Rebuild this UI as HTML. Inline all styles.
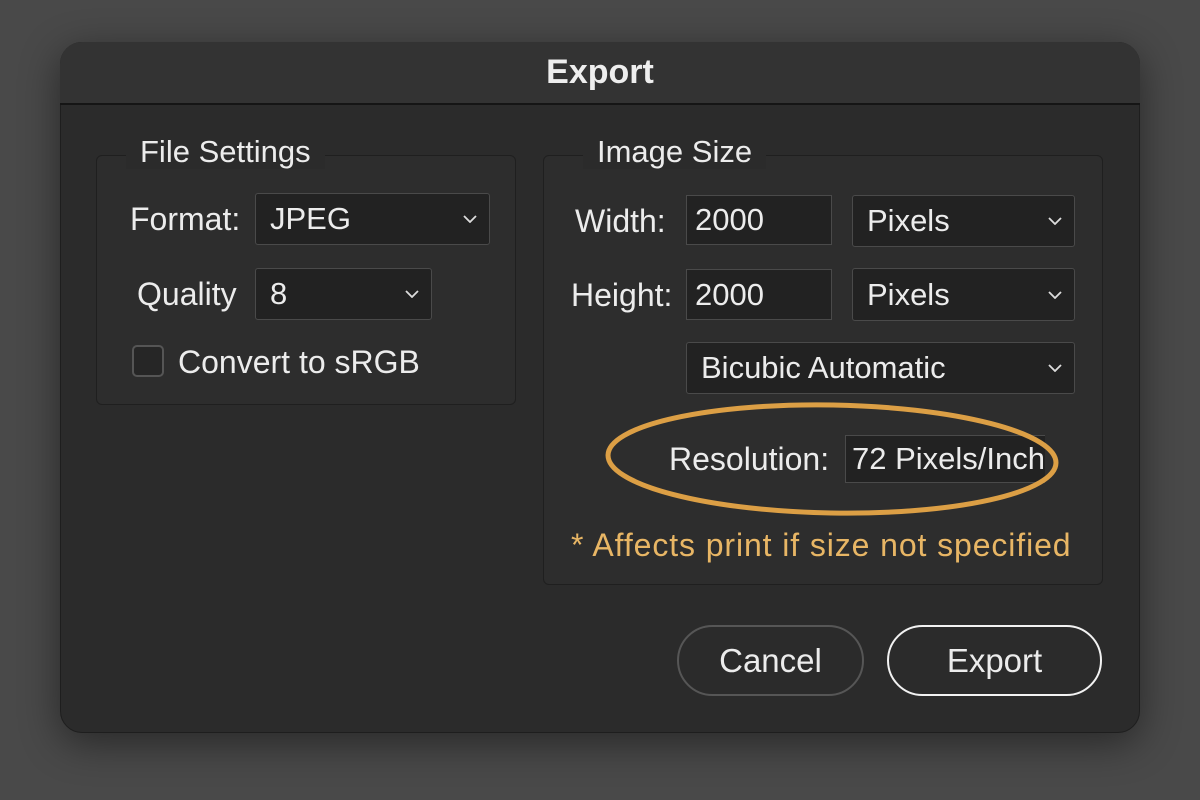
<!DOCTYPE html>
<html><head><style>
*{margin:0;padding:0;box-sizing:border-box}
body{width:1200px;height:800px;background:#494949;font-family:"Liberation Sans",sans-serif;color:#ececec;position:relative;overflow:hidden}
.dlg{position:absolute;left:60px;top:42px;width:1080px;height:691px;background:#2b2b2b;border-radius:22px;border:1px solid #1e1e1e;box-shadow:0 10px 40px rgba(0,0,0,.45)}
.tb{position:absolute;left:0;top:0;width:100%;height:63px;background:#333;border-radius:22px 22px 0 0;border-bottom:2px solid #151515;text-align:center;font-weight:bold;font-size:34px;line-height:60px;color:#eee}
.a{position:absolute;white-space:nowrap}
.fs{position:absolute;border:1px solid #1f1f1f;border-radius:6px;background:#2d2d2d}
.lg{position:absolute;background:#2b2b2b;padding:0 14px;font-size:31px;line-height:34px}
.lbl{font-size:32px;line-height:34px}
.box{position:absolute;background:#222;border:1px solid #4a4a4a;border-radius:3px;font-size:31px;padding-left:14px;display:flex;align-items:center}
.box svg{position:absolute;right:12px;top:50%;margin-top:-4px}
.btn{position:absolute;border-radius:36px;font-size:33px;display:flex;align-items:center;justify-content:center}
</style></head><body>
<div class="dlg"></div>
<div class="a" style="left:60px;top:42px;width:1080px;height:63px;">
<div class="tb">Export</div></div>

<div class="fs" style="left:96px;top:155px;width:420px;height:250px"></div>
<div class="a lg" style="left:126px;top:135px">File Settings</div>
<div class="a lbl" style="left:130px;top:202px">Format:</div>
<div class="box" style="left:255px;top:193px;width:235px;height:52px">JPEG<svg width="14" height="8"><path d="M1 1l6 6 6-6" stroke="#ddd" stroke-width="1.8" fill="none"/></svg></div>
<div class="a lbl" style="left:137px;top:277px">Quality</div>
<div class="box" style="left:255px;top:268px;width:177px;height:52px">8<svg width="14" height="8"><path d="M1 1l6 6 6-6" stroke="#ddd" stroke-width="1.8" fill="none"/></svg></div>
<div class="a" style="left:132px;top:345px;width:32px;height:32px;border:2px solid #555;border-radius:5px;background:#262626"></div>
<div class="a lbl" style="left:178px;top:345px">Convert to sRGB</div>

<div class="fs" style="left:543px;top:155px;width:560px;height:430px"></div>
<div class="a lg" style="left:583px;top:135px">Image Size</div>
<div class="a lbl" style="left:575px;top:204px">Width:</div>
<div class="box" style="left:686px;top:195px;width:146px;height:50px;padding-left:8px;border-radius:0">2000</div>
<div class="box" style="left:852px;top:195px;width:223px;height:52px">Pixels<svg width="14" height="8"><path d="M1 1l6 6 6-6" stroke="#ddd" stroke-width="1.8" fill="none"/></svg></div>
<div class="a lbl" style="left:571px;top:278px">Height:</div>
<div class="box" style="left:686px;top:269px;width:146px;height:51px;padding-left:8px;border-radius:0">2000</div>
<div class="box" style="left:852px;top:268px;width:223px;height:53px">Pixels<svg width="14" height="8"><path d="M1 1l6 6 6-6" stroke="#ddd" stroke-width="1.8" fill="none"/></svg></div>
<div class="box" style="left:686px;top:342px;width:389px;height:52px">Bicubic Automatic<svg width="14" height="8"><path d="M1 1l6 6 6-6" stroke="#ddd" stroke-width="1.8" fill="none"/></svg></div>
<div class="a lbl" style="left:669px;top:442px">Resolution:</div>
<div class="box" style="left:845px;top:435px;width:200px;height:48px;padding-left:6px;border-radius:0;overflow:hidden;border-right:none">72 Pixels/Inch</div>
<svg class="a" style="left:0;top:0" width="1200" height="800"><ellipse cx="832" cy="459" rx="224" ry="54" fill="none" stroke="#dc9f45" stroke-width="5" transform="rotate(1 832 459)"/></svg>
<div class="a lbl" style="left:571px;top:528px;color:#e8b665;letter-spacing:0.9px">* Affects print if size not specified</div>

<div class="btn" style="left:677px;top:625px;width:187px;height:71px;border:2px solid #565656">Cancel</div>
<div class="btn" style="left:887px;top:625px;width:215px;height:71px;border:2.5px solid #f2f2f2">Export</div>
</body></html>
